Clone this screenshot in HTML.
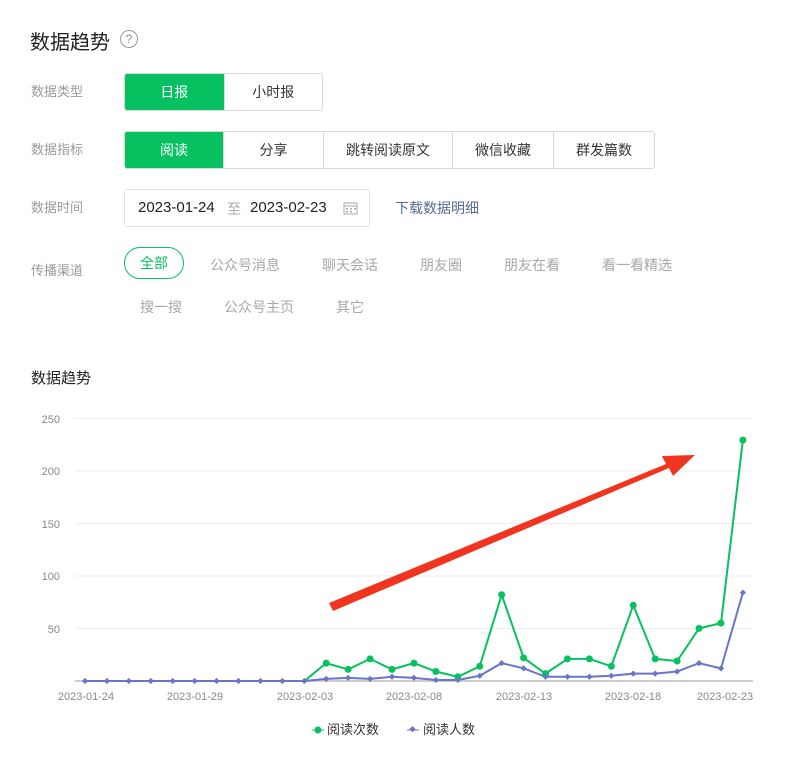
<!DOCTYPE html>
<html><head><meta charset="utf-8">
<style>
*{margin:0;padding:0;box-sizing:border-box}
body{width:799px;height:761px;background:#fff;font-family:"Liberation Sans","Noto Sans CJK SC",sans-serif;position:relative;overflow:hidden;color:#333}
.a{position:absolute;white-space:nowrap}
.lbl{font-size:13px;color:#9a9a9a}
.seg{position:absolute;border:1px solid #d9d9d9;display:flex;border-radius:3px;overflow:hidden;background:#fff}
.seg div{display:flex;align-items:center;justify-content:center;font-size:14px;color:#353535;border-left:1px solid #d9d9d9}
.seg div:first-child{border-left:none}
.seg .on{background:#07c160;color:#fff}
.ch{font-size:14px;color:#a8a8a8}
</style></head><body>
<div class="a" style="left:30px;top:26px;font-size:20px;color:#222">数据趋势</div>
<div class="a" style="left:120px;top:30px;width:18px;height:18px;border:1px solid #999;border-radius:50%;font-size:12px;color:#888;text-align:center;line-height:16px">?</div>

<div class="a lbl" style="left:31px;top:81px">数据类型</div>
<div class="seg" style="left:124px;top:73px;width:199px;height:38px"><div class="on" style="width:99px">日报</div><div style="width:99px">小时报</div></div>

<div class="a lbl" style="left:31px;top:139px">数据指标</div>
<div class="seg" style="left:124px;top:131px;width:531px;height:38px"><div class="on" style="width:98px">阅读</div><div style="width:100px">分享</div><div style="width:129px">跳转阅读原文</div><div style="width:101px">微信收藏</div><div style="width:101px">群发篇数</div></div>

<div class="a lbl" style="left:31px;top:197px">数据时间</div>
<div class="a" style="left:124px;top:189px;width:246px;height:38px;border:1px solid #e2e2e2;border-radius:3px"></div>
<div class="a" style="left:138px;top:199px;font-size:15px;color:#222">2023-01-24</div>
<div class="a" style="left:227px;top:199px;font-size:14px;color:#aaa">至</div>
<div class="a" style="left:250px;top:199px;font-size:15px;color:#222">2023-02-23</div>
<svg class="a" style="left:343px;top:201px" width="16" height="14" viewBox="0 0 16 14"><rect x="1" y="2" width="13" height="11" fill="none" stroke="#aaa"/><line x1="1" y1="5" x2="14" y2="5" stroke="#aaa"/><g fill="#aaa"><rect x="3" y="7" width="2" height="1.5"/><rect x="7" y="7" width="2" height="1.5"/><rect x="11" y="7" width="2" height="1.5"/><rect x="3" y="10" width="2" height="1.5"/><rect x="7" y="10" width="2" height="1.5"/></g></svg>
<div class="a" style="left:395px;top:198px;font-size:14px;color:#576b95">下载数据明细</div>

<div class="a lbl" style="left:31px;top:260px">传播渠道</div>
<div class="a" style="left:124px;top:247px;width:60px;height:32px;border:1px solid #07c160;border-radius:16px;color:#07c160;font-size:14px;text-align:center;line-height:30px">全部</div>
<div class="a ch" style="left:210px;top:255px">公众号消息</div>
<div class="a ch" style="left:322px;top:255px">聊天会话</div>
<div class="a ch" style="left:420px;top:255px">朋友圈</div>
<div class="a ch" style="left:504px;top:255px">朋友在看</div>
<div class="a ch" style="left:602px;top:255px">看一看精选</div>
<div class="a ch" style="left:140px;top:297px">搜一搜</div>
<div class="a ch" style="left:224px;top:297px">公众号主页</div>
<div class="a ch" style="left:336px;top:297px">其它</div>

<div class="a" style="left:31px;top:367px;font-size:15px;color:#222">数据趋势</div>

<svg class="a" style="left:0;top:400px" width="799" height="361" id="ch" viewBox="0 400 799 361" font-family="Liberation Sans, sans-serif">
<g stroke="#eeeeee" stroke-width="1">
<line x1="75" y1="418.5" x2="753" y2="418.5"/><line x1="75" y1="471" x2="753" y2="471"/><line x1="75" y1="523.5" x2="753" y2="523.5"/><line x1="75" y1="576" x2="753" y2="576"/><line x1="75" y1="628.5" x2="753" y2="628.5"/>
</g>
<line x1="75" y1="681" x2="753" y2="681" stroke="#ccc" stroke-width="2"/>
<g font-size="11" fill="#888" text-anchor="end">
<text x="60" y="423">250</text><text x="60" y="475">200</text><text x="60" y="528">150</text><text x="60" y="580">100</text><text x="60" y="633">50</text>
</g>
<g font-size="11" fill="#888" text-anchor="middle">
<text x="86" y="700">2023-01-24</text><text x="195" y="700">2023-01-29</text><text x="305" y="700">2023-02-03</text><text x="414" y="700">2023-02-08</text><text x="524" y="700">2023-02-13</text><text x="633" y="700">2023-02-18</text><text x="725" y="700">2023-02-23</text>
</g>
<g id="lines"></g>
<polygon points="329,603 666,464 662,456 695,455 673,476 669,468 333,611" fill="#f0341f"/>
<circle cx="318" cy="730" r="3.5" fill="#07c160"/><line x1="312" y1="730" x2="324" y2="730" stroke="#07c160"/>
<text x="327" y="734" font-size="13" fill="#333" font-family="Liberation Sans, Noto Sans CJK SC, sans-serif">阅读次数</text>
<line x1="407" y1="730" x2="419" y2="730" stroke="#6a74c9"/><rect x="410" y="727" width="4.5" height="4.5" fill="#6a74c9" transform="rotate(45 412.5 729.5)"/>
<text x="423" y="734" font-size="13" fill="#333" font-family="Liberation Sans, Noto Sans CJK SC, sans-serif">阅读人数</text>
</svg>
<script>
var g=[0,0,0,0,0,0,0,0,0,0,0,17,11,21,11,17,9,4,14,82,22,7,21,21,14,72,21,19,50,55,229];
var b=[0,0,0,0,0,0,0,0,0,0,0,2,3,2,4,3,1,1,5,17,12,4,4,4,5,7,7,9,17,12,84];
function X(d){return 85+21.93*d}function Y(v){return 681-1.052*v}
var s='';
var pg=[];for(var i=10;i<=30;i++)pg.push(X(i)+','+Y(g[i]));
s+='<polyline points="'+pg.join(' ')+'" fill="none" stroke="#07c160" stroke-width="2"/>';
var pb=[];for(var i=0;i<=30;i++)pb.push(X(i)+','+Y(b[i]));
s+='<polyline points="'+pb.join(' ')+'" fill="none" stroke="#6a74c9" stroke-width="2"/>';
for(var i=11;i<=30;i++)s+='<circle cx="'+X(i)+'" cy="'+Y(g[i])+'" r="3.5" fill="#07c160"/>';
for(var i=0;i<=30;i++){var x=X(i),y=Y(b[i]);s+='<rect x="'+(x-2.2)+'" y="'+(y-2.2)+'" width="4.4" height="4.4" fill="#6a74c9" transform="rotate(45 '+x+' '+y+')"/>';}
document.getElementById('lines').innerHTML=s;
</script>
</body></html>
